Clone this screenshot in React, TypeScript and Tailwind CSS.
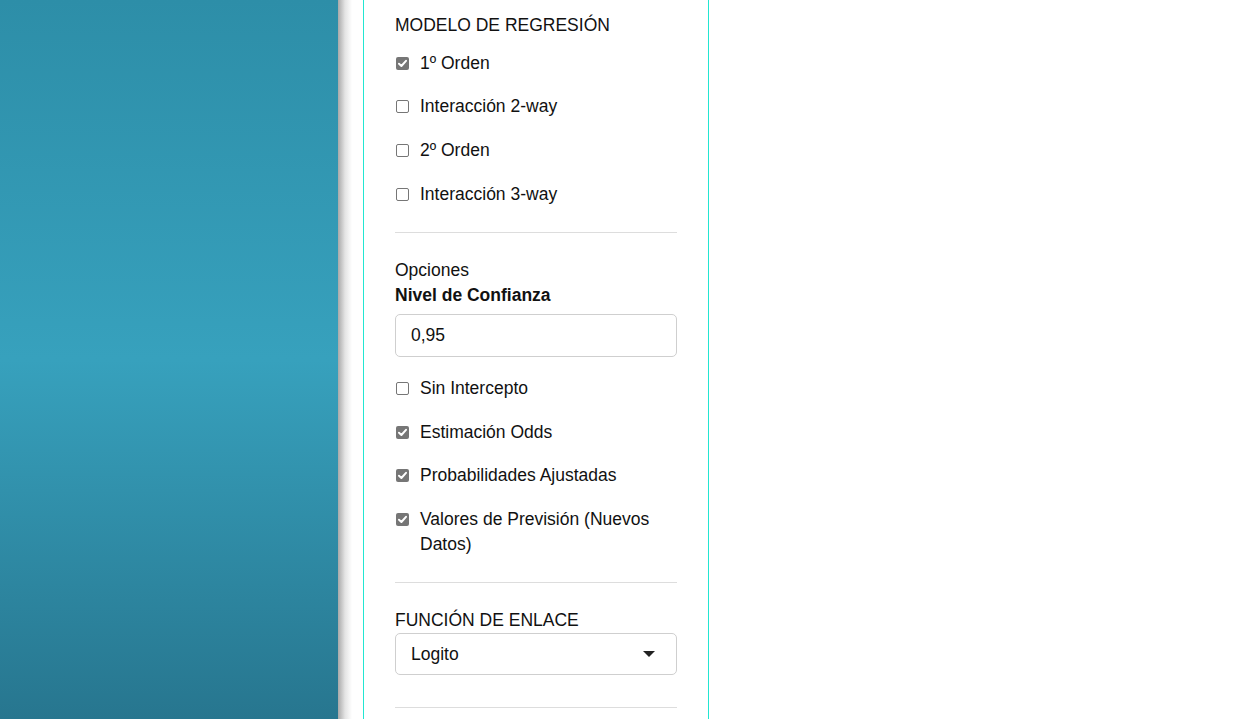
import React from "react";

function Box({ checked }: { checked: boolean }) {
  if (checked) {
    return (
      <span className="mt-[6px] flex h-[13px] w-[13px] shrink-0 items-center justify-center rounded-[2px] bg-[#767676]">
        <svg width="11" height="11" viewBox="0 0 11 11">
          <path d="M2 5.8 L4.4 8 L9 2.8" fill="none" stroke="#fff" strokeWidth="2" strokeLinecap="round" strokeLinejoin="round" />
        </svg>
      </span>
    );
  }
  return <span className="mt-[6px] h-[13px] w-[13px] shrink-0 rounded-[2px] border border-[#767676] bg-white" />;
}

function Check({ label, checked = false }: { label: string; checked?: boolean }) {
  return (
    <div className="flex items-start gap-[11px] pl-[1px]">
      <Box checked={checked} />
      <span>{label}</span>
    </div>
  );
}

export default function App() {
  return (
    <div
      className="flex h-[719px] w-[1246px] overflow-hidden bg-white text-[17.5px] leading-[25px] text-[#111]"
      style={{ fontFamily: '"Liberation Sans", Arial, sans-serif' }}
    >
      <div className="h-full w-[338px] shrink-0 bg-gradient-to-b from-[#2d8ea8] via-[#37a1bd] to-[#27768f]" />
      <div className="h-full w-[14px] shrink-0 bg-gradient-to-r from-[#a9a9a9] via-[#e4e4e4] to-white" />
      <div className="w-[11px] shrink-0" />
      <div className="flex h-full w-[346px] shrink-0 flex-col border-x border-[#22e6d2] px-[31px] pt-[13px]">
        <div>MODELO DE REGRESIÓN</div>
        <div className="mt-[12.5px] flex flex-col gap-[18.75px]">
          <Check label="1º Orden" checked />
          <Check label="Interacción 2-way" />
          <Check label="2º Orden" />
          <Check label="Interacción 3-way" />
        </div>
        <div className="my-[25px] h-px bg-[#dddddd]" />
        <div>Opciones</div>
        <div className="font-bold">Nivel de Confianza</div>
        <div className="mt-[6.5px] flex h-[43px] items-center rounded-[5px] border border-[#cfcfcf] px-[15px]">0,95</div>
        <div className="mt-[18.5px] flex flex-col gap-[18.75px]">
          <Check label="Sin Intercepto" />
          <Check label="Estimación Odds" checked />
          <Check label="Probabilidades Ajustadas" checked />
          <Check label="Valores de Previsión (Nuevos Datos)" checked />
        </div>
        <div className="my-[25px] h-px bg-[#dddddd]" />
        <div>FUNCIÓN DE ENLACE</div>
        <div className="flex h-[42px] items-center justify-between rounded-[5px] border border-[#cfcfcf] pl-[15px] pr-[21px]">
          <span>Logito</span>
          <svg width="12" height="6" viewBox="0 0 12 6">
            <path d="M0 0 L12 0 L6 6 Z" fill="#222" />
          </svg>
        </div>
        <div className="mt-[32px] h-px bg-[#dddddd]" />
      </div>
      <div className="flex-1" />
    </div>
  );
}
